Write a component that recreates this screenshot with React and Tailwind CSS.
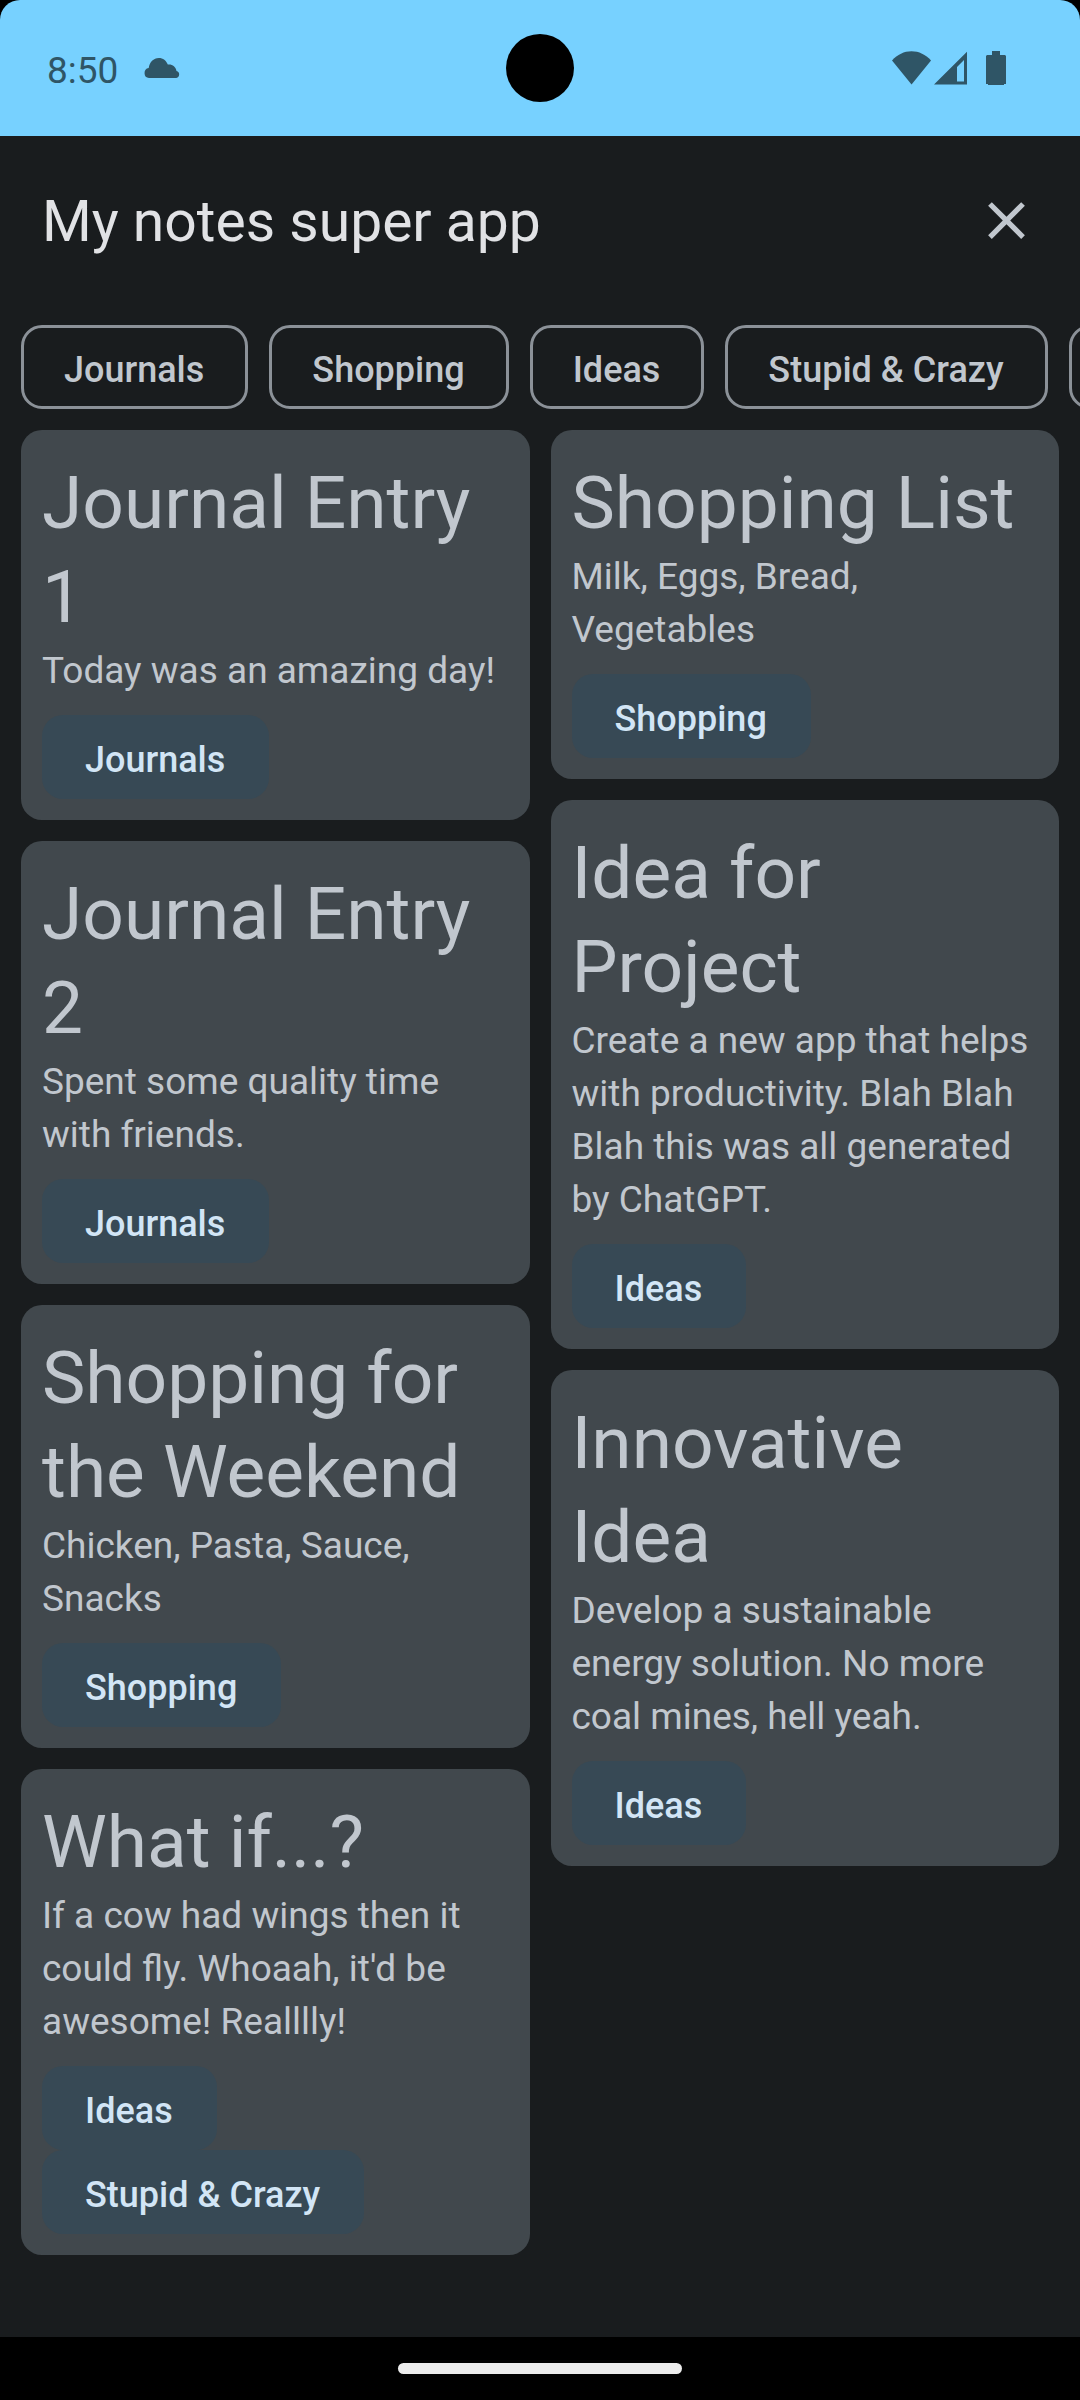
const filters = ["Journals", "Shopping", "Ideas", "Stupid & Crazy"];

const columns = [
  [
    { title: "Journal Entry 1", body: "Today was an amazing day!", tags: ["Journals"] },
    { title: "Journal Entry 2", body: "Spent some quality time with friends.", tags: ["Journals"] },
    { title: "Shopping for the Weekend", body: "Chicken, Pasta, Sauce, Snacks", tags: ["Shopping"] },
    {
      title: "What if...?",
      body: "If a cow had wings then it could fly. Whoaah, it'd be awesome! Realllly!",
      tags: ["Ideas", "Stupid & Crazy"],
    },
  ],
  [
    { title: "Shopping List", body: "Milk, Eggs, Bread, Vegetables", tags: ["Shopping"] },
    {
      title: "Idea for Project",
      body: "Create a new app that helps with productivity. Blah Blah Blah this was all generated by ChatGPT.",
      tags: ["Ideas"],
    },
    {
      title: "Innovative Idea",
      body: "Develop a sustainable energy solution. No more coal mines, hell yeah.",
      tags: ["Ideas"],
    },
  ],
];

function StatusBar() {
  return (
    <div className="bg-black">
      <div className="grid h-[136px] grid-cols-[1fr_auto_1fr] items-center rounded-t-[20px] bg-[#77d1ff] pr-[74px] pl-[47px] text-[#2f5566]">
        <div className="flex items-center gap-[26px]">
          <span className="pt-[5px] text-[37px] leading-[44px]">8:50</span>
          <svg className="h-5 w-9" viewBox="0 0 36 20" fill="currentColor" aria-label="Cloud">
            <path d="M5 20a5 5 0 0 1-.3-9.900C5.500 4.300 9.500 0 14.800 0c4.200 0 7.600 2.700 9 6.600 4.500-.6 7.900 2.200 8.700 6.400A3.600 3.600 0 0 1 32.300 20z" />
          </svg>
        </div>
        <div className="ml-[27px] size-[68px] rounded-full bg-black" />
        <div className="flex items-center justify-end">
          <svg className="h-[34px] w-[39px]" viewBox="0 0 39 34" fill="currentColor" aria-label="Wi-Fi">
            <path d="M0 9.500C5.500 3.600 12 .3 19.500.3S33.500 3.600 39 9.500L19.500 33.500z" />
          </svg>
          <svg className="ml-[3px] h-[34px] w-[33px]" viewBox="0 0 33 34" fill="currentColor" fillRule="evenodd" aria-label="Mobile signal">
            <path d="M33 .8V33.500H0zM30 9l-7 7v14.500h7z" />
          </svg>
          <svg className="ml-[19px] h-[34px] w-5" viewBox="0 0 20 34" fill="currentColor" aria-label="Battery">
            <path d="M6 0h8v4h5l1 1v28h-2v1H2v-1H0V5l1-1h5z" />
          </svg>
        </div>
      </div>
    </div>
  );
}

function NoteCard({ note }) {
  return (
    <article className="rounded-[21px] bg-[#41484d] px-[21px] pt-[26px] pb-[21px] text-[#c1c7ce]">
      <h2 className="text-[73px] leading-[94px]">{note.title}</h2>
      <p className="text-[37px] leading-[53px]">{note.body}</p>
      <div className="mt-[18px] flex flex-col items-start">
        {note.tags.map((tag) => (
          <button
            key={tag}
            type="button"
            className="h-[84px] rounded-[21px] bg-[#374955] pt-[5px] pr-[44px] pl-[43px] text-[36px] font-medium whitespace-nowrap text-[#d2e5f5]"
          >
            {tag}
          </button>
        ))}
      </div>
    </article>
  );
}

export default function App() {
  return (
    <div className="flex min-h-screen flex-col bg-[#191c1e] font-['Roboto',sans-serif]">
      <StatusBar />
      <header className="flex h-[168px] items-center justify-between px-[42px]">
        <h1 className="pt-1 text-[57px] leading-[74px] text-[#e1e2e5]">My notes super app</h1>
        <button type="button" aria-label="Close" className="flex size-[63px] items-center justify-center text-[#c1c7ce]">
          <svg className="size-[63px]" viewBox="0 0 24 24" fill="currentColor">
            <path d="M19 6.410 17.590 5 12 10.590 6.410 5 5 6.410 10.590 12 5 17.590 6.410 19 12 13.410 17.590 19 19 17.590 13.410 12z" />
          </svg>
        </button>
      </header>
      <nav aria-label="Categories" className="flex gap-[21px] overflow-hidden px-[21px] pt-[21px]">
        {filters.map((name) => (
          <button
            key={name}
            type="button"
            className="h-[84px] shrink-0 rounded-[21px] border-[3px] border-[#8b9198] pt-[5px] pr-[41px] pl-[40px] text-[36px] font-medium whitespace-nowrap text-[#c1c7ce]"
          >
            {name}
          </button>
        ))}
        <button
          type="button"
          aria-label="More categories"
          className="h-[84px] w-60 shrink-0 rounded-[21px] border-[3px] border-[#8b9198]"
        />
      </nav>
      <main className="grid flex-1 grid-cols-2 items-start gap-[21px] p-[21px]">
        {columns.map((notes, index) => (
          <div key={index} className="flex flex-col gap-[21px]">
            {notes.map((note) => (
              <NoteCard key={note.title} note={note} />
            ))}
          </div>
        ))}
      </main>
      <footer className="flex h-[63px] items-center justify-center bg-black">
        <div className="h-[11px] w-[284px] rounded-full bg-[#ececec]" />
      </footer>
    </div>
  );
}
